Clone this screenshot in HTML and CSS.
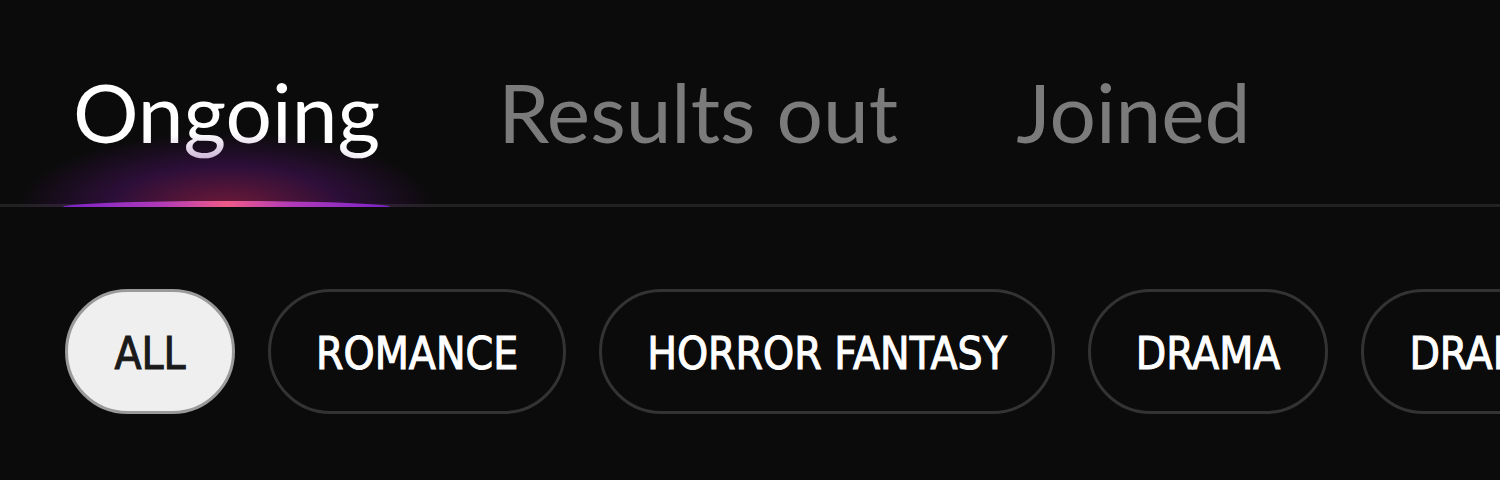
FILE: index.html
```html
<!DOCTYPE html>
<html lang="en">
<head>
    <meta charset="UTF-8">
    <meta name="viewport" content="width=device-width, initial-scale=1.0">
    <title>Contests</title>
    <link rel="stylesheet" href="styles.css">
</head>
<body>
    <nav class="tabs">
        <div class="tab active">Ongoing<span class="glow"></span><span class="bar"></span></div>
        <div class="tab">Results out</div>
        <div class="tab">Joined</div>
    </nav>

    <div class="chips">
        <button class="chip selected">ALL</button>
        <button class="chip">ROMANCE</button>
        <button class="chip">HORROR FANTASY</button>
        <button class="chip">DRAMA</button>
        <button class="chip">DRAMA</button>
    </div>
</body>
</html>
```

FILE: styles.css
```css
body {
    margin: 0;
    background-color: #0b0b0b;
    color: #fff;
    overflow: hidden;
    height: 480px;
}
.tabs {
    display: flex;
    gap: 98px;
    padding: 0 0 0 63px;
    border-bottom: 3px solid #222;
    height: 207px;
    box-sizing: border-box;
}
.tab {
    position: relative;
    font-family: Lato, sans-serif;
    font-size: 82px;
    line-height: 1;
    padding: 70px 10px 0;
    color: #7b7b7b;
}
.tab.active {
    color: #fff;
}
.glow {
    position: absolute;
    left: -45px;
    right: -45px;
    bottom: -3px;
    height: 75px;
    background: radial-gradient(ellipse 50% 100% at 50% 100%, rgba(175, 35, 85, 0.6), rgba(95, 20, 125, 0.4) 55%, rgba(40, 10, 60, 0) 100%);
    pointer-events: none;
}
.bar {
    position: absolute;
    left: 0;
    right: 0;
    bottom: -3px;
    height: 6px;
    border-radius: 50% 50% 0 0 / 100% 100% 0 0;
    background: linear-gradient(90deg, #7a22c8, #b03ab8 30%, #f05a88 50%, #b03ab8 70%, #7a22c8);
}
.chips {
    display: flex;
    gap: 33px;
    padding: 82px 0 0 65px;
    white-space: nowrap;
}
.chip {
    flex-shrink: 0;
    min-width: 170px;
    height: 125px;
    padding: 4px 45px 0;
    border: 3px solid #333;
    border-radius: 63px;
    background-color: #0b0b0b;
    color: #fff;
    font-family: "DejaVu Sans Condensed", "DejaVu Sans", sans-serif;
    font-size: 44px;
    -webkit-text-stroke: 1px currentColor;
    box-sizing: border-box;
}
.chip.selected {
    background-color: #efefef;
    border-color: #9a9a9a;
    color: #1a1a1a;
}
```
